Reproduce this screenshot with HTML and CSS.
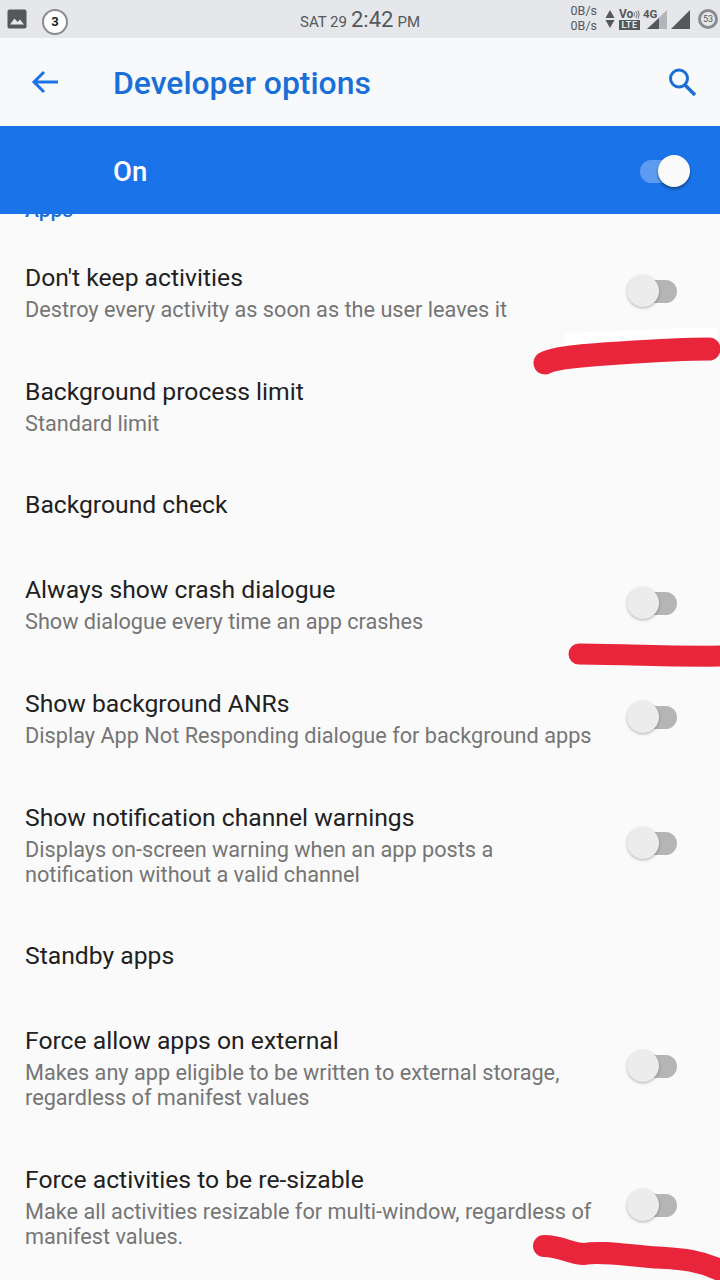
FILE: index.html
```html
<!DOCTYPE html>
<html lang="en">
<head>
    <meta charset="UTF-8">
    <meta name="viewport" content="width=device-width, initial-scale=1.0">
    <title>Developer options</title>
    <link rel="stylesheet" href="styles.css">
</head>
<body>
    <div class="status-bar">
        <div class="status-left">
            <svg class="pic-icon" width="20" height="20" viewBox="0 0 20 20">
                <rect width="19" height="19" x="0.5" y="0.5" rx="2" fill="#55575b"/>
                <path d="M3 15.5 L7.5 9.5 L10.5 13 L13 10.5 L17 15.5 Z" fill="#e6e7ea"/>
            </svg>
            <span class="count-badge">3</span>
        </div>
        <div class="status-clock">
            <span class="clock-small">SAT 29</span>
            <span class="clock-time">2:42</span>
            <span class="clock-small">PM</span>
        </div>
        <div class="status-right">
            <div class="net-speed"><span>0B/s</span><span>0B/s</span></div>
            <svg class="net-arrows" width="10" height="20" viewBox="0 0 10 20">
                <path d="M5 1 L9.5 9 H0.5 Z M0.5 11 H9.5 L5 19 Z" fill="#55575b"/>
            </svg>
            <div class="volte">
                <span class="volte-top">Vo<svg width="8" height="11" viewBox="0 0 8 11"><path d="M1 8 Q3 5.5 1 3 M3.5 9.5 Q6.5 5.5 3.5 1.500 M6 10.500 Q9 5.500 6 .5" fill="none" stroke="#55575b" stroke-width="1"/></svg></span>
                <span class="volte-lte">LTE</span>
            </div>
            <div class="signal-4g">
                <span class="label-4g">4G</span>
                <svg width="20" height="19" viewBox="0 0 20 19">
                    <path d="M20 0 V19 H0 Z" fill="#b4b5b8"/>
                    <path d="M12 8 V19 H0 Z" fill="#55575b"/>
                </svg>
            </div>
            <svg class="signal" width="19" height="19" viewBox="0 0 19 19">
                <path d="M19 0 V19 H0 Z" fill="#55575b"/>
            </svg>
            <div class="battery"><span>53</span></div>
        </div>
    </div>

    <div class="app-bar">
        <svg class="back-icon" width="28" height="24" viewBox="0 0 28 24">
            <path d="M27 12 H3 M13 2 L3 12 L13 22" fill="none" stroke="#1a73e8" stroke-width="3"/>
        </svg>
        <h1 class="app-title">Developer options</h1>
        <svg class="search-icon" width="30" height="30" viewBox="0 0 30 30">
            <circle cx="12" cy="11.500" r="8.500" fill="none" stroke="#1a6fd6" stroke-width="3"/>
            <path d="M18 18 L28 28" fill="none" stroke="#1a6fd6" stroke-width="3.500"/>
        </svg>
    </div>

    <div class="master-bar">
        <span class="master-label">On</span>
        <div class="toggle on"><span class="knob"></span></div>
    </div>

    <div class="list">
        <div class="category">Apps</div>

        <div class="row">
            <div class="row-text">
                <div class="row-title">Don't keep activities</div>
                <div class="row-sub">Destroy every activity as soon as the user leaves it</div>
            </div>
            <div class="toggle"><span class="knob"></span></div>
        </div>
        <div class="row">
            <div class="row-text">
                <div class="row-title">Background process limit</div>
                <div class="row-sub">Standard limit</div>
            </div>
        </div>
        <div class="row single">
            <div class="row-text">
                <div class="row-title">Background check</div>
            </div>
        </div>
        <div class="row">
            <div class="row-text">
                <div class="row-title">Always show crash dialogue</div>
                <div class="row-sub">Show dialogue every time an app crashes</div>
            </div>
            <div class="toggle"><span class="knob"></span></div>
        </div>
        <div class="row">
            <div class="row-text">
                <div class="row-title">Show background ANRs</div>
                <div class="row-sub">Display App Not Responding dialogue for background apps</div>
            </div>
            <div class="toggle"><span class="knob"></span></div>
        </div>
        <div class="row">
            <div class="row-text">
                <div class="row-title">Show notification channel warnings</div>
                <div class="row-sub">Displays on-screen warning when an app posts a<br>notification without a valid channel</div>
            </div>
            <div class="toggle"><span class="knob"></span></div>
        </div>
        <div class="row single">
            <div class="row-text">
                <div class="row-title">Standby apps</div>
            </div>
        </div>
        <div class="row">
            <div class="row-text">
                <div class="row-title">Force allow apps on external</div>
                <div class="row-sub">Makes any app eligible to be written to external storage,<br>regardless of manifest values</div>
            </div>
            <div class="toggle"><span class="knob"></span></div>
        </div>
        <div class="row">
            <div class="row-text">
                <div class="row-title">Force activities to be re-sizable</div>
                <div class="row-sub">Make all activities resizable for multi-window, regardless of<br>manifest values.</div>
            </div>
            <div class="toggle"><span class="knob"></span></div>
        </div>
    </div>

    <!-- hand drawn marks on top of the screenshot -->
    <svg class="scribbles" width="720" height="1280" viewBox="0 0 720 1280">
        <path d="M566 333 Q640 330 716 327 L720 350 L560 360 Z" fill="#ffffff"/>
        <g fill="none" stroke="#e8253b" stroke-linecap="round" stroke-linejoin="round">
            <path d="M545 363 C552 359 570 356 620 353 C650 351 680 349 709 349" stroke-width="23"/>
            <path d="M579 654 C620 654 670 657 730 656" stroke-width="21"/>
            <path d="M544 1246 C562 1246 570 1254 584 1254 C600 1251 625 1255 650 1257 C675 1259 695 1258 722 1271" stroke-width="22"/>
        </g>
    </svg>
</body>
</html>
```

FILE: styles.css
```css
* {
    margin: 0;
    padding: 0;
    box-sizing: border-box;
}
html, body {
    width: 720px;
    height: 1280px;
    overflow: hidden;
}
body {
    position: relative;
    background-color: #fafafa;
    font-family: Roboto, "Noto Sans", sans-serif;
}

/* status bar */
.status-bar {
    display: grid;
    grid-template-columns: 1fr auto 1fr;
    align-items: center;
    height: 38px;
    background-color: #e6e7ea;
    color: #55575b;
}
.status-left {
    display: flex;
    align-items: center;
    padding-left: 7px;
}
.count-badge {
    display: flex;
    justify-content: center;
    align-items: center;
    width: 26px;
    height: 26px;
    margin: 5px 0 0 15px;
    background: white;
    border: 2px solid #8a8b8e;
    border-radius: 50%;
    color: #222;
    font-size: 13px;
    font-weight: 700;
}
.status-clock {
    display: flex;
    align-items: baseline;
    gap: 4px;
}
.clock-small {
    font-size: 15px;
}
.clock-time {
    font-size: 22px;
}
.status-right {
    display: flex;
    align-items: center;
    justify-content: flex-end;
    padding-right: 2px;
}
.net-speed {
    display: flex;
    flex-direction: column;
    margin: 0 8px 2px 0;
    font-size: 12.500px;
    line-height: 15px;
}
.net-arrows {
    margin-right: 4px;
}
.volte {
    display: flex;
    flex-direction: column;
    width: 21px;
    margin-right: 3px;
}
.volte-top {
    display: flex;
    align-items: center;
    height: 11px;
    font-size: 12px;
    font-weight: 700;
    line-height: 11px;
}
.volte-lte {
    height: 10px;
    background: #55575b;
    color: #e6e7ea;
    font-size: 9px;
    font-weight: 700;
    line-height: 10px;
    text-align: center;
    letter-spacing: 0.5px;
}
.signal-4g {
    position: relative;
    width: 24px;
    height: 20px;
    margin-right: 4px;
    display: flex;
    justify-content: flex-end;
    align-items: flex-end;
}
.label-4g {
    position: absolute;
    left: 0;
    top: 0;
    font-size: 11.500px;
    font-weight: 700;
    line-height: 11px;
}
.signal {
    margin-right: 8px;
}
.battery {
    display: flex;
    justify-content: center;
    align-items: center;
    width: 20px;
    height: 20px;
    border: 3px solid #8a8b8e;
    border-radius: 50%;
    background: #e6e7ea;
    font-size: 9px;
}

/* top bars */
.app-bar {
    display: flex;
    align-items: center;
    height: 88px;
    background-color: #f8f9fb;
}
.back-icon {
    margin-left: 31px;
}
.app-title {
    margin-left: 54px;
    padding-top: 2px;
    flex: 1;
    color: #1a6fd6;
    font-size: 31.900px;
    font-weight: 500;
}
.search-icon {
    margin-right: 23px;
}
.master-bar {
    display: flex;
    justify-content: space-between;
    align-items: center;
    height: 88px;
    padding: 2px 43px 0 113px;
    background-color: #1a73e8;
    position: relative;
    z-index: 1;
}
.master-label {
    color: white;
    font-size: 27.500px;
    font-weight: 500;
}

/* settings list */
.list {
    background-color: #fafafa;
}
.category {
    height: 34px;
    margin-top: -14px;
    padding-left: 25px;
    color: #1a6fd6;
    font-size: 21px;
    font-weight: 500;
    line-height: 20px;
}
.row {
    display: flex;
    justify-content: space-between;
    align-items: center;
    min-height: 84px;
    padding: 27px 43px 27px 25px;
}
.row.single {
    padding: 26px 43px 26px 25px;
}
.row-text {
    margin: 1px 0 -1px;
}
.row-title {
    color: #212121;
    font-size: 24.700px;
    line-height: 32px;
}
.row-sub {
    margin-top: 3px;
    color: #757575;
    font-size: 21.700px;
    line-height: 25px;
}

/* switches */
.toggle {
    position: relative;
    flex: none;
    width: 37px;
    height: 23px;
    border-radius: 12px;
    background-color: #b5b5b5;
}
.knob {
    position: absolute;
    left: -13px;
    top: -5px;
    width: 32px;
    height: 32px;
    border-radius: 50%;
    background-color: #ececec;
    box-shadow: 0 1px 3px rgba(0, 0, 0, 0.3);
}
.toggle.on {
    background-color: #5c9bf0;
}
.toggle.on .knob {
    left: 18px;
    background-color: #fafafa;
    box-shadow: 0 2px 3px rgba(0, 0, 0, 0.4);
}

.scribbles {
    position: absolute;
    left: 0;
    top: 0;
    z-index: 2;
}
```
